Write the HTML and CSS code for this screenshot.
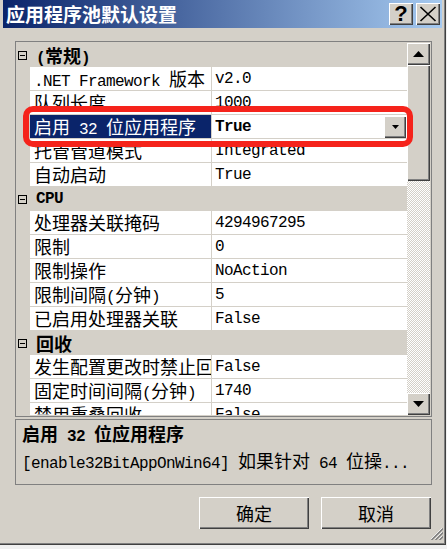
FILE: index.html
```html
<!DOCTYPE html>
<html lang="zh-CN">
<head>
<meta charset="utf-8">
<title>应用程序池默认设置</title>
<link rel="stylesheet" href="styles.css">
</head>
<body>
<div class="window">
  <div class="titlebar">
    <span class="title">应用程序池默认设置</span>
    <div class="tbtns">
      <div class="tbtn help">?</div>
      <div class="tbtn close">
        <svg width="18" height="16" viewBox="0 0 18 16"><path d="M1.5 1 L16.5 15 M16.5 1 L1.5 15" stroke="#000" stroke-width="1.6" fill="none"/></svg>
      </div>
    </div>
  </div>

  <div class="grid">
    <div class="list">
      <div class="cat"><span class="toggle"></span><span><span class="en">(</span>常规<span class="en">)</span></span></div>
      <div class="row"><div class="gutter"></div><div class="label"><span class="en">.NET Framework </span>版本</div><div class="val en">v2.0</div></div>
      <div class="row"><div class="gutter"></div><div class="label">队列长度</div><div class="val en">1000</div></div>
      <div class="row"><div class="gutter"></div><div class="label sel">启用<span class="en"> 32 </span>位应用程序</div><div class="val en strong">True<span class="dd"><svg width="7" height="4" viewBox="0 0 7 4"><path d="M0 0 H7 L3.5 4 Z" fill="#000"/></svg></span></div></div>
      <div class="row"><div class="gutter"></div><div class="label">托管管道模式</div><div class="val en">Integrated</div></div>
      <div class="row"><div class="gutter"></div><div class="label">自动启动</div><div class="val en">True</div></div>
      <div class="cat"><span class="toggle"></span><span class="en">CPU</span></div>
      <div class="row"><div class="gutter"></div><div class="label">处理器关联掩码</div><div class="val en">4294967295</div></div>
      <div class="row"><div class="gutter"></div><div class="label">限制</div><div class="val en">0</div></div>
      <div class="row"><div class="gutter"></div><div class="label">限制操作</div><div class="val en">NoAction</div></div>
      <div class="row"><div class="gutter"></div><div class="label">限制间隔<span class="en">(</span>分钟<span class="en">)</span></div><div class="val en">5</div></div>
      <div class="row"><div class="gutter"></div><div class="label">已启用处理器关联</div><div class="val en">False</div></div>
      <div class="cat"><span class="toggle"></span><span>回收</span></div>
      <div class="row"><div class="gutter"></div><div class="label">发生配置更改时禁止回</div><div class="val en">False</div></div>
      <div class="row"><div class="gutter"></div><div class="label">固定时间间隔<span class="en">(</span>分钟<span class="en">)</span></div><div class="val en">1740</div></div>
      <div class="row"><div class="gutter"></div><div class="label">禁用重叠回收</div><div class="val en">False</div></div>
    </div>
    <div class="vscroll">
      <div class="sbtn"><svg width="11" height="6" viewBox="0 0 11 6"><path d="M0 6 H11 L5.5 0 Z" fill="#000"/></svg></div>
      <div class="thumb"></div>
      <div class="track"></div>
      <div class="sbtn"><svg width="11" height="6" viewBox="0 0 11 6"><path d="M0 0 H11 L5.5 6 Z" fill="#000"/></svg></div>
    </div>
  </div>

  <div class="desc">
    <div class="desc-title">启用<span class="en"> 32 </span>位应用程序</div>
    <div class="desc-text"><span class="en">[enable32BitAppOnWin64] </span>如果针对<span class="en"> 64 </span>位操<span class="en">...</span></div>
  </div>

  <div class="actions">
    <div class="btn">确定</div>
    <div class="btn">取消</div>
  </div>

  <div class="highlight"></div>
  <div class="grip">
    <svg width="13" height="13" viewBox="0 0 13 13">
      <path d="M12 1 L1 12 M12 5 L5 12 M12 9 L9 12" stroke="#fff" stroke-width="1" fill="none"/>
      <path d="M13 1.5 L1.5 13 M13 5.5 L5.5 13 M13 9.5 L9.5 13" stroke="#808080" stroke-width="1.6" fill="none"/>
    </svg>
  </div>
</div>
</body>
</html>
```

FILE: styles.css
```css
body {
  margin: 0;
  background: #f0f0f0;
}

.window {
  position: relative;
  width: 446px;
  height: 545px;
  box-sizing: border-box;
  padding: 0 3px;
  background: #d4d0c8;
  border-right: 1px solid #404040;
  border-bottom: 1px solid #404040;
  box-shadow: inset -1px -1px #808080;
  font-family: "Noto Sans CJK SC", sans-serif;
  font-size: 18px;
  color: #000;
}

.en {
  font-family: "Liberation Mono", monospace;
  font-size: 16px;
  letter-spacing: -0.6px;
}

.titlebar {
  height: 28px;
  display: flex;
  align-items: center;
  padding: 0 2px 0 3px;
  background: linear-gradient(to right, #0a246a, #a6caf0);
}

.title {
  flex: 1;
  color: #fff;
  font-weight: bold;
  font-size: 19px;
  line-height: 28px;
  white-space: nowrap;
}

.tbtns {
  display: flex;
  gap: 3px;
}

.tbtn {
  width: 24px;
  height: 22px;
  display: flex;
  align-items: center;
  justify-content: center;
  background: #d4d0c8;
  box-shadow: inset 1px 1px #fff, inset -1px -1px #404040, inset -2px -2px #808080;
}

.help {
  font-family: "Liberation Sans", sans-serif;
  font-weight: bold;
  font-size: 22px;
  line-height: 22px;
}

.grid {
  margin: 13px 0 0 12px;
  width: 417px;
  height: 376px;
  box-sizing: border-box;
  border: 1px solid #808080;
  padding: 1px;
  display: flex;
}

.list {
  width: 390px;
  overflow: hidden;
}

.cat {
  height: 24px;
  display: flex;
  align-items: center;
  background: #d4d0c8;
  font-weight: bold;
  white-space: nowrap;
}

.toggle {
  position: relative;
  width: 9px;
  height: 9px;
  box-sizing: border-box;
  border: 1px solid #000;
  margin: 0 9px 0 1px;
}

.toggle::after {
  content: "";
  position: absolute;
  left: 1px;
  top: 3px;
  width: 5px;
  height: 1px;
  background: #000;
}

.row {
  height: 24px;
  display: flex;
}

.gutter {
  width: 13px;
  flex: none;
}

.label {
  width: 182px;
  flex: none;
  box-sizing: border-box;
  padding-left: 4px;
  background: #fff;
  border-right: 1px solid #d4d0c8;
  border-bottom: 1px solid #d4d0c8;
  line-height: 23px;
  white-space: nowrap;
  overflow-x: clip;
  overflow-y: visible;
}

.label.sel {
  background: #0a246a;
  color: #fff;
}

.val {
  flex: 1;
  display: flex;
  align-items: center;
  box-sizing: border-box;
  padding-left: 3px;
  background: #fff;
  border-bottom: 1px solid #d4d0c8;
  white-space: nowrap;
}

.val.strong {
  font-weight: bold;
}

.dd {
  margin-left: auto;
  margin-right: 1px;
  width: 22px;
  height: 22px;
  flex: none;
  display: flex;
  align-items: center;
  justify-content: center;
  background: #d4d0c8;
  box-shadow: inset 1px 1px #fff, inset -1px -1px #404040, inset -2px -2px #808080;
}

.vscroll {
  width: 23px;
  display: flex;
  flex-direction: column;
}

.sbtn {
  height: 22px;
  flex: none;
  display: flex;
  align-items: center;
  justify-content: center;
  background: #d4d0c8;
  box-shadow: inset 1px 1px #fff, inset -1px -1px #404040, inset -2px -2px #808080;
}

.thumb {
  height: 116px;
  flex: none;
  background: #d4d0c8;
  box-shadow: inset 1px 1px #fff, inset -1px -1px #404040, inset -2px -2px #808080;
}

.track {
  flex: 1;
  background: repeating-conic-gradient(#d4d0c8 0 25%, #ffffff 0 50%);
  background-size: 2px 2px;
}

.desc {
  margin: 2px 0 0 12px;
  width: 417px;
  height: 66px;
  box-sizing: border-box;
  border: 1px solid #808080;
  padding: 2px 6px 0;
  white-space: nowrap;
}

.desc-title {
  font-weight: bold;
  line-height: 23px;
}

.desc-text {
  line-height: 23px;
}

.actions {
  margin: 12px 0 0 12px;
  width: 417px;
  box-sizing: border-box;
  padding-right: 1px;
  display: flex;
  justify-content: flex-end;
  gap: 12px;
}

.btn {
  width: 110px;
  height: 32px;
  display: flex;
  align-items: center;
  justify-content: center;
  background: #d4d0c8;
  box-shadow: inset 1px 1px #fff, inset -1px -1px #404040, inset -2px -2px #808080;
}

.highlight {
  position: absolute;
  left: 23px;
  top: 106px;
  width: 390px;
  height: 41px;
  box-sizing: border-box;
  border: 6px solid #f5231b;
  border-radius: 10px;
}

.grip {
  position: absolute;
  right: 2px;
  bottom: 4px;
  width: 13px;
  height: 13px;
  line-height: 0;
}
```
